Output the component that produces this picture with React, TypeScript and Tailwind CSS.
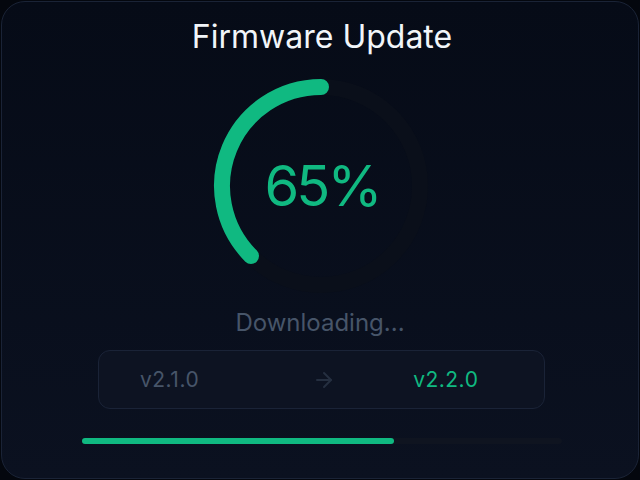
import { ArrowRight } from 'lucide-react';

const progress = 65;

const ProgressRing = () => {
  return (
    <svg width="240" height="240" viewBox="0 0 240 240" className="ml-[2px]">
      <circle cx="120" cy="120" r="99" fill="none" stroke="#0a0f1a" strokeWidth="16" />
      <path
        d="M120 21 A99 99 0 0 0 50 190"
        fill="none"
        stroke="#10b981"
        strokeWidth="16"
        strokeLinecap="round"
      />
      <text
        x="121"
        y="120"
        textAnchor="middle"
        dominantBaseline="central"
        fill="#10b981"
        fontSize="56"
        letterSpacing="-3"
        fontFamily="Inter, sans-serif"
      >
        {progress}%
      </text>
    </svg>
  );
};

export default function App() {
  return (
    <div className="w-[640px] h-[480px] bg-[#04070e] pt-px pl-px font-['Inter',sans-serif]">
      <div className="w-[638px] h-[478px] rounded-[24px] border border-[#1a2336] bg-gradient-to-b from-[#060b17] to-[#0b1120] flex flex-col items-center pt-[15px]">
        <h1 className="text-[32px] leading-[40px] text-[#f1f5f9] font-normal ml-[4px]">Firmware Update</h1>

        <div className="mt-[9px]">
          <ProgressRing />
        </div>

        <p className="mt-px text-[24px] leading-[32px] text-[#475569]">Downloading...</p>

        <div className="mt-[11px] ml-[3px] w-[447px] h-[59px] rounded-[12px] border border-[#1a2337] bg-[#0d1322] flex items-center text-[21px] leading-[28px] tracking-[0.5px]">
          <span className="ml-[41px] text-[#475569]">v2.1.0</span>
          <ArrowRight size={24} strokeWidth={2} className="ml-[113px] text-[#252f40]" />
          <span className="ml-[77px] text-[#10b981]">v2.2.0</span>
        </div>

        <div className="mt-[29px] w-[480px] h-[6px] rounded-full bg-[#0f1420] ml-[4px]">
          <div className="h-full rounded-full bg-[#10b981]" style={{ width: `${progress}%` }} />
        </div>
      </div>
    </div>
  );
}
